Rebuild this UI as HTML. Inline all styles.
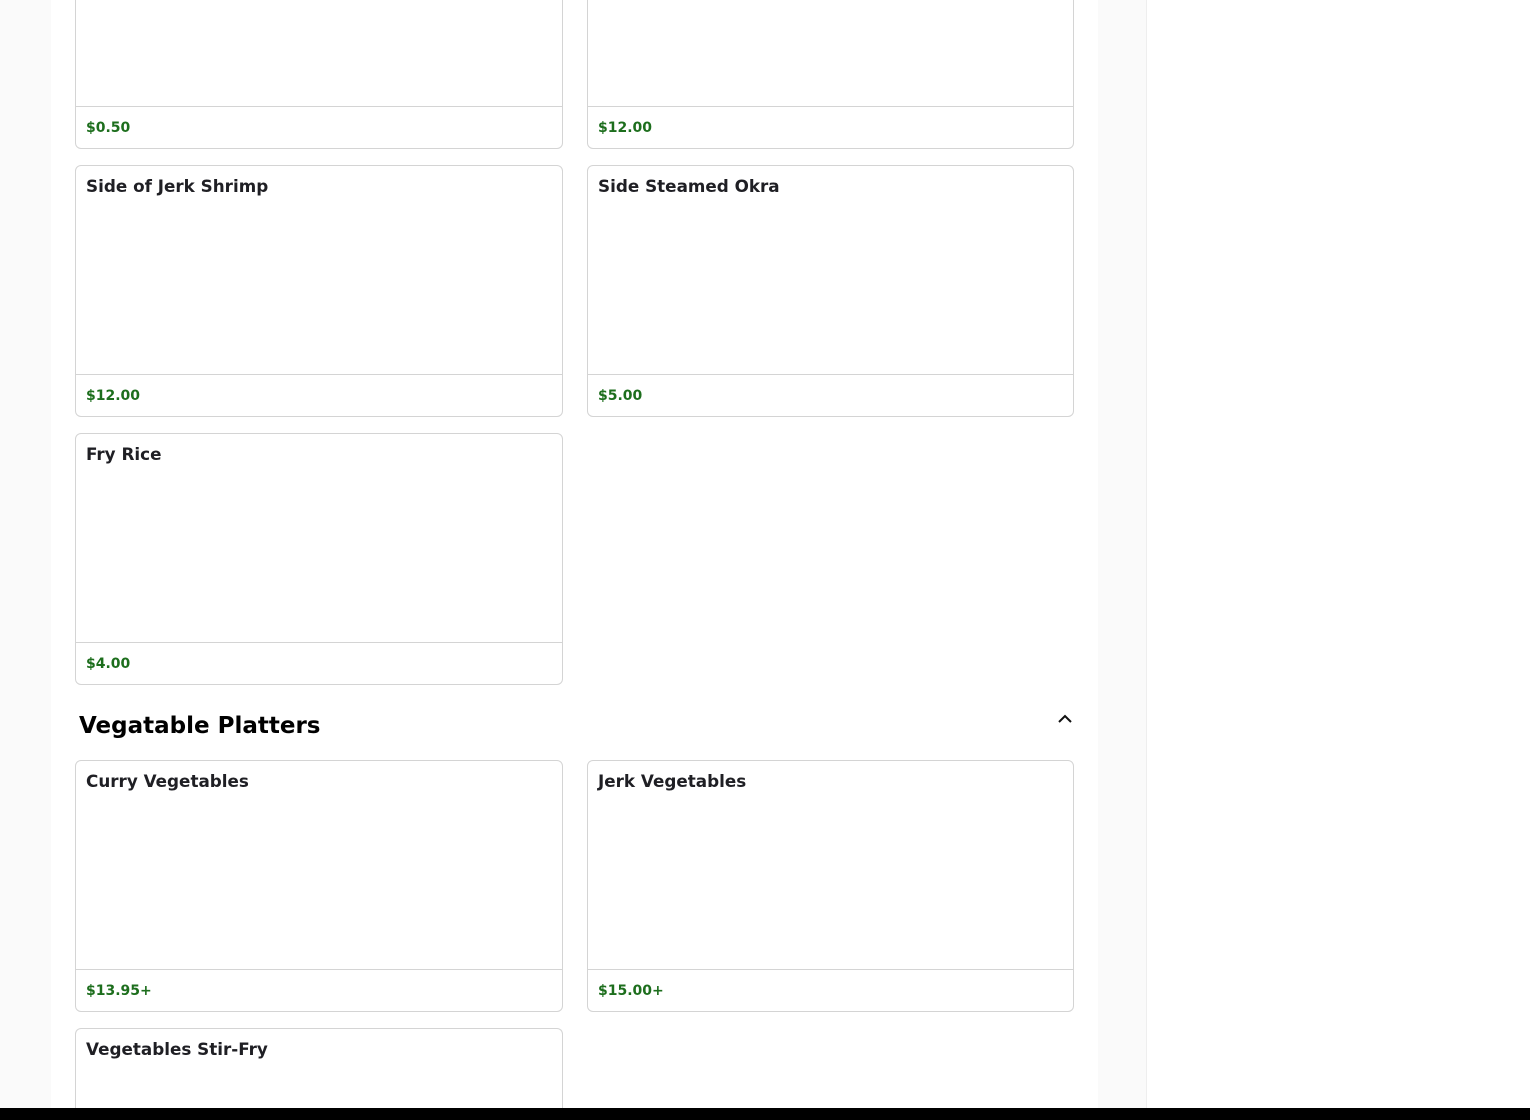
<!DOCTYPE html>
<html style="overflow:hidden;height:1120px"><head><style>
*{box-sizing:border-box;margin:0;padding:0}
body{width:1530px;height:1120px;overflow:hidden;background:#fff;font-family:"DejaVu Sans","Liberation Sans",sans-serif;position:relative}
.lg{position:absolute;left:0;top:0;width:51px;height:1120px;background:#fafafa}
.rg{position:absolute;left:1098px;top:0;width:49px;height:1120px;background:#fafafa;border-right:1px solid #eee}
.card{position:absolute;width:488px;border:1px solid #d4d4d4;border-radius:6px;background:#fff;overflow:hidden}
.card .t{position:absolute;left:10px;top:10px;font-size:16.8px;font-weight:bold;color:#1f1f24}
.card .f{position:absolute;left:0;right:0;bottom:0;height:42px;border-top:1px solid #d4d4d4}
.card .p{position:absolute;left:10px;top:13px;font-size:14px;font-weight:bold;color:#1d6e1d}
h2{position:absolute;left:79px;top:713px;font-size:23px;font-weight:bold;color:#000}
.bar{position:absolute;left:0;top:1108px;width:1530px;height:12px;background:#000}
</style></head><body>
<div class="lg"></div><div class="rg"></div>
<div class="card" style="left:75px;top:-110px;height:259px"><div class="f"><div class="p">$0.50</div></div></div>
<div class="card" style="left:587px;top:-110px;height:259px;width:487px"><div class="f"><div class="p">$12.00</div></div></div>
<div class="card" style="left:75px;top:165px;height:252px"><div class="t">Side of Jerk Shrimp</div><div class="f"><div class="p">$12.00</div></div></div>
<div class="card" style="left:587px;top:165px;height:252px;width:487px"><div class="t">Side Steamed Okra</div><div class="f"><div class="p">$5.00</div></div></div>
<div class="card" style="left:75px;top:433px;height:252px"><div class="t">Fry Rice</div><div class="f"><div class="p">$4.00</div></div></div>
<h2>Vegatable Platters</h2>
<svg style="position:absolute;left:1057px;top:713px" width="16" height="12" viewBox="0 0 16 12"><path d="M2 9 L8 3 L14 9" fill="none" stroke="#111" stroke-width="2"/></svg>
<div class="card" style="left:75px;top:760px;height:252px"><div class="t">Curry Vegetables</div><div class="f"><div class="p">$13.95+</div></div></div>
<div class="card" style="left:587px;top:760px;height:252px;width:487px"><div class="t">Jerk Vegetables</div><div class="f"><div class="p">$15.00+</div></div></div>
<div class="card" style="left:75px;top:1028px;height:90px;border-bottom:none;border-radius:6px 6px 0 0"><div class="t">Vegetables Stir-Fry</div></div>
<div class="bar"></div>
</body></html>
